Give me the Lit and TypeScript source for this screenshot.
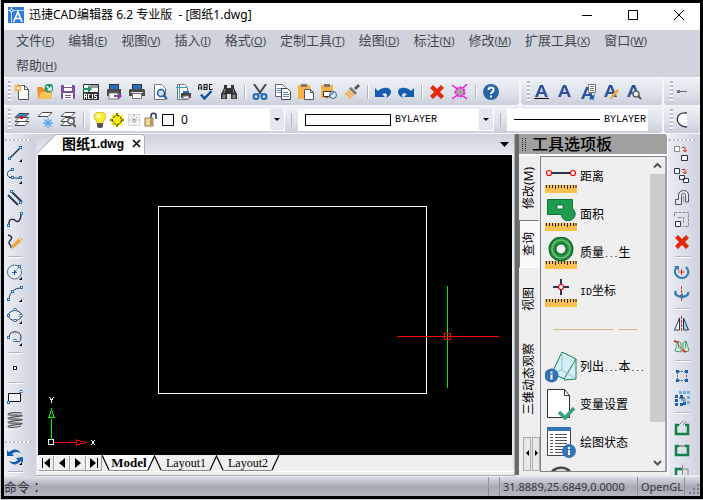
import { LitElement, html, svg, css, TemplateResult, SVGTemplateResult } from "lit";
import { customElement, property, state } from "lit/decorators.js";
import { classMap } from "lit/directives/class-map.js";

const NAVY = "#26364f";
const BLUE = "#1f5fa8";
const RED = "#e02a1a";

const node = (x: number, y: number) => svg`<rect x=${x} y=${y} width="2" height="2" fill="#fff" stroke="#2e74bd" stroke-width="1"/>`;
const flyout = svg`<path d="M15 13v3h-3z" fill="#000"/>`;
const page = svg`<path d="M4.5 1.5h6l4 4v10h-10z" fill="#fff" stroke="#555"/><path d="M10.5 1.5v4h4" fill="none" stroke="#555"/>`;
const letterA = svg`<path fill-rule="evenodd" d="M6 1h3l5 12h-3l-1-3H5l-1 3H1zM5.800 8h3.400L7.500 3.500z" fill="#2f549b"/>`;
const sheet = (y: number, fill: string) => svg`<path d="M5 ${y}h10l-4 4H1z" fill=${fill} stroke="#4a4a4a"/>`;
const dot = (x: number, y: number, c = "#1c62b7") => svg`<rect x=${x} y=${y} width="3" height="3" fill=${c}/>`;

const ICONS: Record<string, SVGTemplateResult> = {
  new: svg`${page}<path d="M4 0v8M0 4h8M1 1l6 6M7 1L1 7" stroke="#f39c1f" stroke-width="1.200"/><circle cx="4" cy="4" r="1.500" fill="#fff"/>`,
  open: svg`<path d="M0 3h5l2 2h7v10H1z" fill="#e8912c"/><path d="M4 8h12l-3 7H1z" fill="#fbc15c"/><circle cx="12" cy="4" r="4.500" fill="#23966a"/><path d="M9.500 2l4 4M14 2.500V6h-3.500" stroke="#fff" stroke-width="1.500" fill="none"/>`,
  save: svg`<path d="M1 1h13l1 1v13H1z" fill="#7b4f99"/><path d="M4 1h8v6H4zM3 9h10v6H3z" fill="#fff"/><path d="M4 3.500h8M5 11.500h6M5 13.500h6" stroke="#7b4f99"/>`,
  acis: svg`<path d="M.5.5h15v15H.5z" fill="#fff" stroke="#333"/><path d="M7 1h8v3H7z" fill="#999"/><path d="M0 4h5V1l4 4-4 4V6H0z" fill="#23966a"/><path d="M0 8h16v8H0z" fill="#333"/><path d="M1.500 15v-5h2v5M1.500 12.500h2M7.500 10.500h-2v4h2M9.500 10v5M14 10.500h-2.500v2h2v2H11" stroke="#fff" fill="none"/>`,
  export: svg`<path d="M3 0h10v5H3z" fill="#333"/><path d="M4 1h8v4H4z" fill="#2370bd"/><path d="M1 5h14v7H1z" fill="#4a4a4a"/><path d="M3 9h9v6H3z" fill="#fff" stroke="#777"/><path d="M8 11h4V8l4 4-4 4v-3H8z" fill="#8343a5"/>`,
  print: svg`<path d="M3 0h10v5H3z" fill="#333"/><path d="M4 1h8v4H4z" fill="#2370bd"/><path d="M0 6l1-1h14l1 1v6H0z" fill="#4a4a4a"/><path d="M3.500 9.500h9v5h-9z" fill="#fff" stroke="#777"/><path d="M2 8.500h12" stroke="#ddd"/>`,
  preview: svg`<path d="M2.500.5h7l4 4v11h-11z" fill="#fff" stroke="#777"/><circle cx="9" cy="9" r="3.500" fill="#cfe4f7" stroke="#1b5da8" stroke-width="1.500"/><path d="M11.500 11.500L15 15" stroke="#1b5da8" stroke-width="2"/>`,
  setup: svg`<path d="M2.500.5h7l3 3v12h-10z" fill="#fff" stroke="#777"/><path d="M4.500 0v16M1 3.500h11" stroke="#35a0c9"/><path d="M6 9h10v5H6z" fill="#444"/><path d="M8 7h6v2H8z" fill="#2370bd"/><path d="M8 12h6v3H8z" fill="#fff" stroke="#777"/>`,
  spell: svg`<path d="M.5 6V2l1-1.500h1L3.500 2v4M.5 4h3M6 .5v5h3v-2H6h3v-3zM14.500.5h-3v5h3" fill="none" stroke="#222" stroke-width="1.200"/><path d="M3 10.500l3.500 4L13.500 7" fill="none" stroke="#1553a2" stroke-width="2.500"/>`,
  find: svg`<path d="M3 1h3v3h4V1h3v3l3 6v5h-6v-5H6v5H0v-5l3-6z" fill="#333"/><path d="M2 11h2v3H2zM12 11h2v3h-2zM4 5l-1 4M12 5l1 4" fill="#888" stroke="#888"/>`,
  cut: svg`<path d="M2 0l7 10M14 0L7 10" stroke="#4a4a4a" stroke-width="2"/><circle cx="4" cy="12.500" r="2.500" fill="none" stroke="#1769b8" stroke-width="2"/><circle cx="12" cy="12.500" r="2.500" fill="none" stroke="#1769b8" stroke-width="2"/>`,
  copy: svg`<path d="M.5.5h7l3 3v9H.5z" fill="#fff" stroke="#667"/><path d="M2 4.500h6M2 6.500h6M2 8.500h4" stroke="#5a8fc6"/><path d="M6.500 4.500h6l3 3v8h-9z" fill="#fff" stroke="#445"/><path d="M8 8.500h5M8 10.500h6M8 12.500h6" stroke="#5a8fc6"/>`,
  paste: svg`<path d="M0 1h12v14H0z" fill="#f6b344"/><path d="M3 0h6v3H3z" fill="#777"/><path d="M6.500 5.500h6l3 3v7h-9z" fill="#fff" stroke="#555"/><path d="M12.500 5.500v3h3" fill="none" stroke="#555"/>`,
  pasteBlock: svg`<path d="M0 1h12v13H0z" fill="#f6b344"/><path d="M3 0h6v3H3z" fill="#777"/><path d="M2.500 7.500h8v5h-8z" fill="#fff" stroke="#333"/><circle cx="12" cy="11" r="3.500" fill="#dce8f7" stroke="#3c5e8c"/><path d="M5 14.500l8-6" stroke="#3c5e8c"/>`,
  brush: svg`<path d="M10 4l4-4 2 2-4 4z" fill="#555"/><path d="M7 3l6 6-2 2-6-6z" fill="#777"/><path d="M5 5l6 6-5 5-6-6z" fill="#f1c584"/><path d="M2 9l5 5M4 7l5 5" stroke="#d79b4f"/>`,
  undo: svg`<path d="M0 4l3 3C8 2 16 3 16 8c0 3-3 5-5 6 2-3 1-6-4-4l3 3H0z" fill="#135cb0"/>`,
  redo: svg`<path d="M16 4l-3 3C8 2 0 3 0 8c0 3 3 5 5 6-2-3-1-6 4-4l-3 3h10z" fill="#135cb0"/>`,
  erase: svg`<path d="M4 1l4 4 4-4 3 3-4 4 4 4-3 3-4-4-4 4-3-3 4-4-4-4z" fill="#e12a0a"/>`,
  purge: svg`<circle cx="8" cy="8" r="4.500" fill="#aaa" stroke="#f018e8" stroke-width="2" stroke-dasharray="3 1"/><path d="M0 1l4 3M15 0l-4 4M0 15l4-3M15 15l-4-3" stroke="#f018e8" stroke-width="1.500"/><path d="M6 6l4 4M10 6l-4 4" stroke="#999"/>`,
  help: svg`<circle cx="8" cy="8" r="8" fill="#2864a5"/><path d="M5.500 6c0-3.500 5.500-3.500 5 0 0 2-2.500 2-2.500 4" fill="none" stroke="#fff" stroke-width="2"/><path d="M7 11.500h2v2H7z" fill="#fff"/>`,
  textUnder: svg`${letterA}<path d="M0 14.500h15" stroke="#111"/>`,
  text: letterA,
  textPage: svg`<g transform="translate(0 2)">${letterA}</g><path d="M8.500.5h7v8h-7z" fill="#fff" stroke="#777"/><path d="M10 2.500h4M10 4.500h4M10 6.500h4" stroke="#777"/><path d="M14 9v2l-3 2v-2l-2 4 5 1-1-1c2-2 2-4 1-7z" fill="#1769b8"/>`,
  textEdit: svg`${letterA}<path d="M14 5l2 2-6 7-3 1 1-3z" fill="#f0a63c"/>`,
  textFind: svg`${letterA}<circle cx="10" cy="10" r="3" fill="#eef" stroke="#666" stroke-width="1.500"/><path d="M12 12l3 3" stroke="#555" stroke-width="2"/>`,
  dimStub: svg`<path d="M2 7.500h10" stroke="#666"/><path d="M2 6h3v3H2z" fill="#777"/>`,
  arcStub: svg`<path d="M12 1C-1-1-1 15 12 15z" fill="#fff"/><path d="M12 1C-1-1-1 15 12 15" fill="none" stroke="#26364f" stroke-width="1.300"/>`,
  layers: svg`${sheet(9.5, "#fff")}${sheet(5.5, "#fff")}${sheet(1.5, "#3c82c4")}<path d="M6 4h3v3H6z" fill="#f00"/>`,
  layerNew: svg`${sheet(0.5, "#fff")}<path d="M11 6v10M6 11h10M7.500 7.500l7 7M14.500 7.500l-7 7" stroke="#58a6ea" stroke-width="1.300"/>`,
  layerFind: svg`${sheet(9.5, "#fff")}${sheet(5.5, "#fff")}${sheet(0.5, "#fff")}<circle cx="11" cy="9" r="3" fill="#eef" stroke="#666" stroke-width="1.500"/><path d="M13 12l3 3" stroke="#555" stroke-width="2"/>`,
  bulb: svg`<path d="M5 10C-1 3 4 0 8 0s9 3 3 10v2H5z" fill="#f8ee31" stroke="#b99b1c" stroke-width=".7"/><circle cx="6.500" cy="4" r="2" fill="#fffcc0"/><path d="M5 11h6v4l-2 1H7l-2-1z" fill="#555"/>`,
  sun: svg`<path d="M8 1v14M1 8h14M3 3l10 10M13 3L3 13" stroke="#fff000" stroke-width="3"/><circle cx="8" cy="8" r="4.500" fill="#ffec00" stroke="#222" stroke-dasharray="3 1"/><path d="M8 1v2M8 13v2M1 8h2M13 8h2" stroke="#222"/>`,
  vpFreeze: svg`<path d="M2.500 2.500h11v11h-11z" fill="none" stroke="#aaa" stroke-dasharray="1 1"/><path d="M8 3v10M3 8h10M4.500 4.500l7 7M11.500 4.500l-7 7" stroke="#999" stroke-dasharray="2 1"/>`,
  lock: svg`<path d="M8 7V3.500c0-3 5-3 5 0V7" fill="none" stroke="#25336b" stroke-width="1.500"/><path d="M2 6h8v8H2z" fill="#eadd9d" stroke="#8b763c"/><path d="M7 7h2v6H7z" fill="#b49c55"/>`,
  swatch: svg`<path d="M2.500 2.500h11v11h-11z" fill="#fff" stroke="#000" stroke-width="1"/>`,
  line: svg`<path d="M2 13L13 2" stroke=${NAVY} stroke-width="1.500"/>${node(1.5, 11.5)}${node(12.5, .5)}${flyout}`,
  pline: svg`<path d="M6 2C-2 2-1 10 5 10h8" fill="none" stroke=${NAVY}/>${node(4.5, .5)}${node(4.5, 8.5)}${node(12.5, 8.5)}${flyout}`,
  mline: svg`<path d="M1 5l10 10M4 1l11 11" stroke=${NAVY} stroke-width="1.800"/>${node(3.5, .5)}${node(12.5, 11.5)}`,
  spline: svg`<path d="M2 14c-1-9 5-7 7-5s5-1 5-7" fill="none" stroke=${NAVY} stroke-width="1.500"/>${node(.5, 12.5)}${node(13.5, .5)}`,
  sketch: svg`<path d="M1 1c7 2 2 5 1 7s3 3 2 6" fill="none" stroke=${NAVY} stroke-width="1.500"/><path d="M13 3l3 3-8 7-4 2 1-4z" fill="#efa63b"/><path d="M12 4l3 3" stroke="#fff"/>`,
  circle: svg`<circle cx="7.500" cy="8" r="7" fill="#eef4fb" stroke="#58697f"/><path d="M5 8.500h5M7.500 6v5" stroke=${BLUE}/><path d="M8 8l4-5" stroke=${BLUE} stroke-dasharray="2 1"/>${node(11.5, 1.5)}${flyout}`,
  arc: svg`<path d="M2 14C2 7 7 2 14 2" fill="none" stroke=${NAVY}/>${node(.5, 12.5)}${node(4.5, 4.5)}${node(13.5, .5)}${flyout}`,
  ellipse: svg`<ellipse cx="8" cy="7.500" rx="6.500" ry="5" fill="#eef4fb" stroke=${NAVY}/>${node(.5, 6.5)}${node(13, 6.5)}${node(7, .5)}${node(7, 11.5)}${flyout}`,
  ellArc: svg`<path d="M2 7c0-7 12-7 12 0s-5 4-6 4" fill="none" stroke=${NAVY}/>${node(.5, 6.5)}${node(7, 9.5)}${flyout}`,
  point: svg`<path d="M6.500 6.500h3v3h-3z" fill="#fff" stroke="#111"/>`,
  rect: svg`<path d="M1.500 3.500h12v8h-12z" fill="#eef3fa" stroke="#111"/>${node(.5, 11.5)}${node(13, .5)}`,
  helix: svg`<path d="M15 1C8 0 1 1 1 2.500s13 0 14 1S1 5 1 6.500s13 0 14 1S1 9 1 10.500s13 0 14 1S1 13 1 14.500s8 1 13-.500" fill="none" stroke="#555" stroke-width="1.200"/>`,
  refresh: svg`<path d="M0 7V1l2 2c5-4 9-3 12 1-4-2-7-1-9 1l2 2zM16 8v6l-2-2c-5 5-9 4-12 0 4 2 7 1 9-1L9 9z" fill="#135cb0"/>${flyout}`,
  copyOne: svg`<path d="M.5.5h5v5h-5z" fill="#fff" stroke="#888"/><path d="M7.500 9.500h6v5h-6z" fill="#fff" stroke=${NAVY}/><path d="M8 1.500h3v4M9 4l2 2 2-2" fill="none" stroke=${RED}/>`,
  copyMany: svg`<path d="M.5.5h5v5h-5z" fill="#fff" stroke=${NAVY}/><path d="M5.500 7.500h5v4h-5zM9.500 10.500h5v4h-5z" fill="#fff" stroke=${NAVY}/><path d="M8 1.500h3v4M9 4l2 2 2-2" fill="none" stroke=${RED}/>`,
  offset: svg`<path d="M1.500 14.500V9.500h3V5c0-6 10-6 10 0v7h-3V5.500c0-3-4-3-4 0v9z" fill="#e4e8ef" stroke="#4b5564"/><path d="M9.500 12V6" stroke="#999"/>`,
  stretch: svg`<path d="M.5 4.500v-4h14v14h-6" fill="none" stroke="#888" stroke-dasharray="3 1"/><path d="M4 5.500h5.500V12" fill="none" stroke="#888" stroke-dasharray="3 1"/><path d="M1.500 9.500h5v5h-5z" fill="#fff" stroke=${NAVY}/>`,
  rotate: svg`<path d="M3 3c-5 5 0 11 5 11s9-6 4-11" fill="none" stroke="#2f7fb5" stroke-width="2"/><path d="M0 2h5v5z" fill="#2f7fb5"/><path d="M7.500 5v6M4.500 8h6" stroke=${RED}/>`,
  rotate3d: svg`<path d="M2 5c-4 7 14 8 12 1" fill="none" stroke="#2f7fb5" stroke-width="2.500"/><path d="M9 13V7l-4 3z" fill="#2f7fb5"/><path d="M7.500 0v15" stroke=${RED} stroke-dasharray="3 1"/>`,
  mirror: svg`<path d="M5.500 2v12h-5z" fill="#fff" stroke=${NAVY}/><path d="M9.500 2v12h5z" fill="#aacdec" stroke=${NAVY}/><path d="M7.500 0v16" stroke=${RED} stroke-dasharray="3 1"/>`,
  mirror3d: svg`<path d="M1 13l3-10 3 2v9zM15 13L12 3 9 5v9z" fill="#e4f4ea" stroke="#43966a"/><path d="M4 3l1 8M12 3l-1 8" stroke="#43966a"/><path d="M0 3l3 1M9 12l3 2" stroke=${RED} stroke-width="2"/><path d="M2 4l8 9" stroke=${RED} stroke-dasharray="2 1"/>`,
  array: svg`<path d="M4 3.500h8M4 12.500h8M3.500 4v8M12.500 4v8" stroke="#667" stroke-dasharray="2 1"/>${dot(2, 2)}${dot(11, 2)}${dot(2, 11)}${dot(11, 11)}`,
  array3d: svg`${dot(5, 1, "#77aee2")}${dot(9, 1, "#77aee2")}${dot(13, 1, "#77aee2")}${dot(13, 6, "#77aee2")}${dot(13, 11, "#77aee2")}${dot(9, 9, "#77aee2")}${dot(1, 5)}${dot(6, 5)}${dot(1, 9)}${dot(1, 13)}${dot(6, 13)}${dot(9, 12)}<path d="M5 8h6M8 5v6" stroke="#345"/>`,
  break1: svg`<path d="M5 5H2v9h12V5h-3" fill="none" stroke="#16804a" stroke-width="2.500"/><path d="M5 5l4-4M9 5l3-4" stroke="#888"/>`,
  break2: svg`<path d="M5 4H2v9h12V4h-3" fill="none" stroke="#16804a" stroke-width="2.500"/><path d="M5 4h6" stroke="#999" stroke-width="2"/>`,
  trim: svg`<path d="M2 16V5h6" fill="none" stroke="#16804a" stroke-width="2.500"/><path d="M8.500 1v15M8 5h6v11" fill="none" stroke="#888"/>`,
};

const ruler = svg`<path d="M0 24h32v8H0z" fill="#fcc04f"/><path d="M1.500 24v3M4.500 24v3M7.500 24v3M10.500 24v4M13.500 24v3M16.500 24v3M19.500 24v3M22.500 24v4M25.500 24v3M28.500 24v3M31 24v3" stroke="#222"/>`;
const info = (x: number, y: number) => svg`<circle cx=${x} cy=${y} r="7" fill="#3573b9"/><path d="M${x - 1} ${y - 1}h2v5h-2zM${x - 1} ${y - 4}h2v2h-2z" fill="#fff"/>`;

const TOOLS: Record<string, SVGTemplateResult> = {
  distance: svg`${ruler}<path d="M4 12h24" stroke="#26364f" stroke-width="2"/><circle cx="4" cy="12" r="2.500" fill="#fff" stroke="#f00" stroke-width="1.200"/><circle cx="28" cy="12" r="2.500" fill="#fff" stroke="#f00" stroke-width="1.200"/>`,
  area: svg`${ruler}<path d="M2.500.5h25v9c6 5 1 13-5 12-4 0-6-3-6-6h-14z" fill="#1c9d4e" stroke="#13713b"/><path d="M12 6h6v4h-6z" fill="#fff" stroke="#13713b"/>`,
  mass: svg`${ruler}<circle cx="16" cy="12" r="8.500" fill="none" stroke="#0d6f2f" stroke-width="8"/><circle cx="16" cy="12" r="8.500" fill="none" stroke="#26903f" stroke-width="5"/><circle cx="16" cy="12" r="9" fill="none" stroke="#75bd76" stroke-width="1.500"/>`,
  ident: svg`${ruler}<path d="M16 4v16M8 12h16" stroke="#26364f" stroke-width="2"/><circle cx="16" cy="12" r="2.500" fill="#fff" stroke="#f00" stroke-width="1.200"/>`,
  list: svg`<path d="M17 1l14 7v20l-14 1-10-7z" fill="#d5f0f8"/><path d="M17 1l14 7-12 20-12-6zM31 8v20l-12 1" fill="none" stroke="#16804a"/><path d="M17 2v17l13 8M17 19l-9 3" fill="none" stroke="#8bc2c8"/>${info(6.5, 24.5)}`,
  vars: svg`<path d="M2.500.5h17l5 6v22h-22z" fill="#fff" stroke="#333"/><path d="M19.500.5v6h5" fill="none" stroke="#333"/><path d="M14 23l6 6 9-10" fill="none" stroke="#34a27b" stroke-width="3.500"/>`,
  status: svg`<path d="M2.500 3.500h23v25h-23z" fill="#fff" stroke="#444"/><path d="M2 0h24v4H2z" fill="#3573b9"/><path d="M5 7.500h3M10 7.500h12M5 10.500h3M10 10.500h12M5 13.500h3M10 13.500h12M5 16.500h3M10 16.500h12M5 19.500h3M10 19.500h12M5 22.500h3M10 22.500h8M5 25.500h3M10 25.500h8" stroke="#555"/>${info(24, 24)}`,
  more: svg`<path d="M6 6c4-6 16-6 20 0z" fill="#444"/><path d="M10 6c3-3 9-3 12 0z" fill="#ddd"/>`,
};

@customElement("cad-icon")
class CadIcon extends LitElement {
  @property() name = "";
  static styles = css`
    :host { display: block; flex: none; width: 16px; height: 16px; }
    svg { display: block; width: 100%; height: 100%; }
  `;
  render() {
    return html`<svg viewBox="0 0 16 16" aria-hidden="true">${ICONS[this.name]}</svg>`;
  }
}

@customElement("tool-strip")
class ToolStrip extends LitElement {
  @property({ attribute: false }) items: string[] = [];
  @property({ type: Boolean, reflect: true }) vertical = false;
  static styles = css`
    :host { display: flex; align-items: center; gap: 7px; min-width: 0; }
    :host([vertical]) { flex-direction: column; gap: 6px; }
    button { flex: none; display: block; width: 16px; height: 16px; padding: 0; border: 0; background: none; }
    .sep { flex: none; width: 1px; height: 14px; background: #b4b6bb; border-right: 1px solid #fff; margin-right: -1px; }
    :host([vertical]) .sep { width: 15px; height: 1px; border-right: 0; margin: 0; border-bottom: 1px solid #fff; }
  `;
  render() {
    return this.items.map((n) =>
      n === "|" ? html`<span class="sep"></span>` : html`<button title=${n} aria-label=${n}><cad-icon name=${n}></cad-icon></button>`);
  }
}

const MENUS: [string, string][] = [
  ["文件", "F"], ["编辑", "E"], ["视图", "V"], ["插入", "I"], ["格式", "O"], ["定制工具", "T"],
  ["绘图", "D"], ["标注", "N"], ["修改", "M"], ["扩展工具", "X"], ["窗口", "W"], ["帮助", "H"],
];

@customElement("app-root")
class AppRoot extends LitElement {
  @state() private layout = "Model";

  static styles = css`
    :host {
      display: block; padding: 0 0 1px 1px; background: #c3ccd8; color: #000;
      font: 12px/16px "Noto Sans", "Noto Sans CJK SC", sans-serif;
    }
    button, select { font: inherit; color: inherit; }
    button { padding: 0; border: 0; background: none; }
    .window {
      box-sizing: border-box; display: flex; flex-direction: column; min-height: calc(100vh - 1px);
      border: 3px solid #000; background: #e6eaf1;
    }
    .title { display: flex; align-items: center; height: 27px; box-sizing: border-box; padding: 0 10px 4px 4px; background: #fff; }
    .logo { width: 16px; height: 16px; margin-right: 5px; }
    .title h1 { flex: 1; margin: 0; font-size: 12px; font-weight: 400; white-space: pre; }
    .caption { display: flex; gap: 24px; }
    .caption button { width: 22px; height: 22px; }
    .caption svg { display: block; }
    .menu { display: flex; flex-wrap: wrap; gap: 5px 14px; padding: 0 16px 2px 12px; background: #cfd3dc; }
    .menu button { height: 20px; font-size: 13px; line-height: 20px; color: #414750; white-space: nowrap; }
    .key { font-size: 11px; }
    .bars { display: flex; flex-direction: column; gap: 1px; padding: 1px 0; background: #f3f5f9; }
    .row { display: flex; gap: 2px; height: 27px; }
    .bar {
      display: flex; align-items: center; gap: 6px; padding-left: 4px; min-width: 0; box-sizing: border-box; border-radius: 3px;
      background: linear-gradient(#eef1f6, #dce1ea 60%, #c9ced9);
    }
    .bar.grow { flex: 1; }
    .bar.text { width: 141px; padding-left: 6px; gap: 4px; }
    .bar.stub { width: 36px; padding-left: 6px; gap: 2px; }
    .grip { flex: none; width: 3px; height: 21px; background: repeating-linear-gradient(#b6bac3 0 2px, #fff 2px 4px); }
    .bar.grow .grip { margin-right: -3px; }
    .combo { box-sizing: border-box; display: flex; align-items: center; height: 22px; background: #fff; }
    .layer { width: 195px; padding-left: 2px; gap: 1px; }
    .color { width: 196px; }
    .ltype { width: 141px; }
    .color, .ltype { padding-left: 7px; gap: 4px; }
    .combo select { flex: 1; min-width: 0; height: 22px; padding: 0; border: 0; background: none; appearance: none; outline: none; }
    .layer select { padding-left: 4px; }
    .color select, .ltype select { font: 10px "Liberation Mono", monospace; }
    .drop { flex: none; width: 14px; height: 21px; background: #e2e6ee; border-right: 1px solid #fff; pointer-events: none; }
    .sample { width: 84px; height: 10px; border: 1px solid #000; }
    .stroke { width: 86px; height: 1px; background: #000; }
    .sep { flex: none; width: 1px; height: 14px; background: #b4b6bb; }
    .main { flex: 1; display: flex; min-height: 0; }
    .side { flex: none; display: flex; flex-direction: column; overflow: hidden; background: linear-gradient(90deg, #eaedf4, #cdd2de); }
    .side .handle { flex: none; height: 2px; width: 26px; margin: 5px 0 5px 1px; background: repeating-linear-gradient(90deg, #b3b7c1 0 2px, #fff 2px 4px); }
    .left { width: 32px; }
    .right { width: 32px; height: 341px; border-left: 1px solid #fff; }
    .left tool-strip { align-self: flex-start; margin-left: 3px; }
    .right tool-strip { align-self: flex-start; margin-left: 6px; }
    .left .second { margin: 13px 0 6px 1px; }
    .doc { flex: 1; display: flex; flex-direction: column; min-width: 0; border-right: 1px solid #aaa; }
    .files { display: flex; align-items: stretch; height: 20px; background: linear-gradient(#cdd2dc, #e3e7ee); border-bottom: 1px solid #fafbfc; }
    .file { position: relative; display: flex; align-items: center; width: 108px; box-sizing: border-box; padding-left: 26px; font-weight: 700; white-space: nowrap; }
    .file svg { position: absolute; left: 0; top: 0; }
    .file span { position: relative; }
    .file .cjk { font-size: 14px; line-height: 18px; }
    .file .lat { font-family: "Liberation Sans", sans-serif; }
    .file button { position: relative; margin-left: 7px; width: 10px; height: 12px; }
    .file button svg { position: static; }
    .files .list { margin-left: auto; margin-right: 4px; width: 10px; }
    .files .list svg { display: block; }
    .canvas { flex: 1; min-height: 0; margin: 0 2px; background: #000; }
    .canvas svg { display: block; width: 100%; height: 300px; }
    .sheets { display: flex; align-items: stretch; height: 16px; margin: 0 2px; background: #efefef; }
    .nav { box-sizing: border-box; width: 16px; border: 1px solid; border-color: #fff #999 #999 #fff; }
    .nav svg { display: block; width: 14px; height: 14px; }
    .sheetrow { display: flex; }
    .sheet { position: relative; height: 16px; font: 12px/16px "Liberation Serif", serif; }
    .sheet svg { position: absolute; left: 0; top: 0; width: 100%; height: 100%; }
    .sheet span { position: relative; }
    .sheet.on { font-weight: 700; font-size: 13px; }
    .sheet.m { width: 54px; }
    .sheet.l { width: 64px; margin-left: -2px; }
    .foot { height: 6px; background: linear-gradient(#fff 0 1px, #efefef 1px 4px, #a6abb8 4px 5px, #eceff4 5px); }
    .palette { flex: none; width: 152px; display: flex; flex-direction: column; background: #efefef; border-left: 4px solid #696969; box-sizing: border-box; height: 341px; }
    .palette h2 { display: flex; align-items: center; gap: 6px; margin: 0; height: 20px; padding-left: 3px; background: #a0a0a0; font-size: 16px; line-height: 20px; font-weight: 500; border-radius: 0 3px 0 0; }
    .dots { width: 4px; height: 14px; background: repeating-linear-gradient(#a0a0a0 0 1px, transparent 1px 2px), repeating-linear-gradient(90deg, #222 0 1px, #a0a0a0 1px 3px); }
    .body { flex: 1; display: flex; min-height: 0; border-top: 2px solid #fff; }
    .vtabs { width: 21px; display: flex; flex-direction: column; align-items: flex-start; }
    .vtab {
      display: flex; align-items: center; justify-content: center; width: 20px; box-sizing: border-box;
      writing-mode: vertical-rl; text-orientation: sideways; transform: rotate(180deg); white-space: nowrap;
    }
    .t0 { height: 64px; } .t1 { height: 48px; } .t2 { height: 62px; } .t3 { height: 98px; }
    .vtab.on { background: #f9f9f9; border: 1px solid; border-color: #fff #777 #777 #fff; }
    .spin { display: flex; gap: 1px; margin: 9px 0 0 4px; flex: 1; }
    .spin button { width: 8px; height: 34px; box-sizing: border-box; border: 1px solid #aaa; background: #e8e8e8; }
    .spin svg { display: block; }
    .tools { flex: 1; display: flex; min-width: 0; border-left: 1px solid #7c828e; border-top: 1px solid #7c828e; border-bottom: 1px solid #7c828e; border-right: 2px solid #9aa0aa; margin-bottom: 3px; }
    ul.list { flex: 1; min-width: 0; margin: 0; padding: 1px 0 0 4px; list-style: none; overflow: hidden; height: 314px; box-sizing: border-box; }
    .tool { display: flex; align-items: center; gap: 3px; height: 38px; white-space: nowrap; }
    .tool svg { display: block; flex: none; }
    .tool .id { font: 10px "Liberation Mono", monospace; }
    .tool .gap { font: 8px "Liberation Mono", monospace; }
    .rule { display: flex; gap: 6px; align-items: center; height: 38px; padding-left: 8px; }
    .rule i { height: 1px; width: 60px; background: #d2b886; }
    .rule i + i { width: 18px; }
    .scroll { flex: none; width: 15px; display: flex; flex-direction: column; background: #f0f0f0; }
    .scroll button { height: 17px; }
    .scroll svg { display: block; margin: auto; }
    .track { flex: 1; }
    .thumb { height: 248px; background: #cdcdcd; }
    .status {
      display: flex; align-items: stretch; height: 19px; line-height: 20px; color: #33373d; font-size: 11px;
      background: linear-gradient(#d9dde4, #a5aab4 50%, #b4b8c1);
    }
    .status div { box-sizing: border-box; border-left: 1px solid #8c919b; padding-left: 3px; white-space: nowrap; }
    .status .cmd { flex: 1; border: 0; padding: 0; font: 13px/20px "Noto Sans CJK TC", sans-serif; }
    .status .p0 { width: 11px; }
    .status .p1 { width: 138px; }
    .status .p2 { width: 47px; }
    .status .p3 { width: 16px; padding: 0; }
  `;

  private tool(icon: string, label: TemplateResult | string) {
    return html`<li class="tool"><svg width="32" height="32" viewBox="0 0 32 32" aria-hidden="true">${TOOLS[icon]}</svg><span>${label}</span></li>`;
  }

  private drop() {
    return html`<svg class="drop" viewBox="0 0 14 21" aria-hidden="true"><path d="M4 9h6l-3 3z" fill="#000"/></svg>`;
  }

  private nav(label: string, d: string) {
    return html`<button class="nav" aria-label=${label}><svg viewBox="0 0 14 14"><path d=${d} /></svg></button>`;
  }

  private sheet(name: string, cls: string) {
    const on = this.layout === name;
    const w = cls === "m" ? 54 : 64;
    return html`<button class=${classMap({ sheet: true, [cls]: true, on })} @click=${() => (this.layout = name)}>
      <svg viewBox="0 0 ${w} 16"><path d="M0 0l7 15h${w - 15}l7-15z" fill=${on ? "#fff" : "#efefef"} /><path d="M7 15.500h${w - 15}" stroke="#888"/><path d="M0 0l7 15M${w - 8} 15l7-15" stroke="#000" stroke-width="1.200" fill="none"/></svg><span>${name}</span></button>`;
  }

  render() {
    return html`
    <div class="window">
      <header class="title">
        <svg class="logo" viewBox="0 0 16 16" aria-hidden="true"><rect width="16" height="16" fill="#2f7be0"/><path d="M0 3.500h16M3.500 0v16" stroke="#b9d5f7"/><circle cx="3.500" cy="3.500" r="1.500" fill="#2f7be0" stroke="#fff"/><path d="M5.500 15L10 5l4 10M7 11.500h6" stroke="#fff" stroke-width="1.700" fill="none"/></svg>
        <h1>迅捷CAD编辑器 6.2 专业版  - [图纸1.dwg]</h1>
        <div class="caption">
          <button aria-label="最小化"><svg width="22" height="22"><path d="M6 11.500h10" stroke="#000"/></svg></button>
          <button aria-label="最大化"><svg width="22" height="22"><path d="M6.500 6.500h9v9h-9z" fill="none" stroke="#000"/></svg></button>
          <button aria-label="关闭"><svg width="22" height="22"><path d="M6 6l10 10M16 6L6 16" stroke="#000"/></svg></button>
        </div>
      </header>
      <nav class="menu">${MENUS.map(([t, k]) => html`<button>${t}<span class="key">(<u>${k}</u>)</span></button>`)}</nav>

      <div class="bars">
        <div class="row">
          <div class="bar grow"><span class="grip"></span>
            <tool-strip .items=${["new", "open", "save", "acis", "export", "print", "preview", "setup", "spell", "find", "|", "cut", "copy", "paste", "pasteBlock", "brush", "|", "undo", "redo", "|", "erase", "purge", "|", "help"]}></tool-strip>
          </div>
          <div class="bar text"><span class="grip"></span><tool-strip .items=${["textUnder", "text", "textPage", "textEdit", "textFind"]}></tool-strip></div>
          <div class="bar stub"><span class="grip"></span><cad-icon name="dimStub"></cad-icon></div>
        </div>
        <div class="row">
          <div class="bar grow"><span class="grip"></span>
            <tool-strip .items=${["layers", "layerNew", "layerFind", "|"]}></tool-strip>
            <div class="combo layer">
              ${["bulb", "sun", "vpFreeze", "lock", "swatch"].map((n) => html`<cad-icon name=${n}></cad-icon>`)}
              <select aria-label="图层"><option>0</option></select>${this.drop()}
            </div>
            <span class="sep"></span>
            <div class="combo color"><span class="sample"></span><select aria-label="颜色"><option>BYLAYER</option></select>${this.drop()}</div>
            <span class="sep"></span>
            <div class="combo ltype"><span class="stroke"></span><select aria-label="线型"><option>BYLAYER</option></select></div>
          </div>
          <div class="bar stub"><span class="grip"></span><cad-icon name="arcStub"></cad-icon></div>
        </div>
      </div>

      <div class="main">
        <aside class="side left">
          <span class="handle"></span>
          <tool-strip vertical .items=${["line", "pline", "mline", "spline", "sketch", "|", "circle", "arc", "ellipse", "ellArc", "|", "point", "|", "rect", "helix"]}></tool-strip>
          <span class="handle second"></span>
          <tool-strip vertical .items=${["refresh", "|"]}></tool-strip>
        </aside>

        <section class="doc">
          <div class="files">
            <div class="file">
              <svg width="110" height="20" aria-hidden="true"><path d="M1 20L20 1h87l2 2v17z" fill="#fff"/><path d="M1 19.500L20 .5h87l1.500 2V20" fill="none" stroke="#a9aeb9"/></svg>
              <span class="cjk">图纸</span><span class="lat">1.dwg</span>
              <button aria-label="关闭图纸"><svg width="10" height="12"><path d="M2 2l7 7M9 2L2 9" stroke="#000" stroke-width="1.500"/></svg></button>
            </div>
            <button class="list" aria-label="图纸列表"><svg width="10" height="20"><path d="M0 8h9l-4.500 5z"/></svg></button>
          </div>
          <div class="canvas">
            <svg viewBox="0 0 474 300" preserveAspectRatio="xMinYMin meet" shape-rendering="crispEdges" fill="none">
              <path d="M120.500 51.500h268v187h-268z" stroke="#fff"/>
              <path d="M409.500 131v102" stroke="#00f000"/><path d="M359 181.500h102M406.500 178.500h6v6h-6z" stroke="#f00"/>
              <path d="M10.500 284.500h5v5h-5z" stroke="#fff"/>
              <path d="M13.500 285v-21M11 262.500h5l-2.500-8z" stroke="#0f0"/>
              <path d="M16 287.500h22M38.500 285v5l9-2.500z" stroke="#f00"/>
              <path d="M11 242l2.500 3 2.500-3M13.500 245v3M53 285l4 5M57 285l-4 5" stroke="#fff"/>
            </svg>
          </div>
          <div class="sheets">
            ${this.nav("第一张", "M3 2h1v10H3zM11 2v10L5 7z")}${this.nav("上一张", "M10 2v10L4 7z")}${this.nav("下一张", "M4 2v10l6-5z")}${this.nav("最后一张", "M3 2v10l6-5zM10 2h1v10h-1z")}
            <div class="sheetrow">${this.sheet("Model", "m")}${this.sheet("Layout1", "l")}${this.sheet("Layout2", "l")}</div>
          </div>
          <div class="foot"></div>
        </section>

        <section class="palette">
          <h2><span class="dots"></span>工具选项板</h2>
          <div class="body">
            <div class="vtabs">
              <button class="vtab t0">修改(M)</button><button class="vtab t1 on">查询</button><button class="vtab t2">视图</button><button class="vtab t3">三维动态观察</button>
              <div class="spin"><button aria-label="向左"><svg width="6" height="32"><path d="M5 12v6l-3-3z"/></svg></button><button aria-label="向右"><svg width="6" height="32"><path d="M2 12v6l3-3z"/></svg></button></div>
            </div>
            <div class="tools">
              <ul class="list">
                ${this.tool("distance", "距离")}
                ${this.tool("area", "面积")}
                ${this.tool("mass", html`质量<span class="gap">...</span>生`)}
                ${this.tool("ident", html`<span class="id">ID</span>坐标`)}
                <li class="rule"><i></i><i></i></li>
                ${this.tool("list", html`列出<span class="gap">...</span>本<span class="gap">...</span>`)}
                ${this.tool("vars", "变量设置")}
                ${this.tool("status", "绘图状态")}
                ${this.tool("more", "")}
              </ul>
              <div class="scroll">
                <button aria-label="向上滚动"><svg width="9" height="9"><path d="M1 6.500L4.500 3 8 6.500" fill="none" stroke="#555" stroke-width="2"/></svg></button>
                <div class="track"><div class="thumb"></div></div>
                <button aria-label="向下滚动"><svg width="9" height="9"><path d="M1 3l3.500 3.500L8 3" fill="none" stroke="#555" stroke-width="2"/></svg></button>
              </div>
            </div>
          </div>
        </section>

        <aside class="side right">
          <span class="handle"></span>
          <tool-strip vertical .items=${["copyOne", "copyMany", "offset", "stretch", "erase", "|", "rotate", "rotate3d", "|", "mirror", "mirror3d", "|", "array", "array3d", "|", "break1", "break2", "trim"]}></tool-strip>
        </aside>
      </div>

      <footer class="status">
        <div class="cmd">命令：</div><div class="p0"></div><div class="p1">31.8889,25.6849,0.0000</div><div class="p2">OpenGL</div>
        <div class="p3"><svg width="15" height="19" aria-hidden="true"><path d="M12 7h2v2h-2zM8 11h2v2H8zM12 11h2v2h-2zM4 15h2v2H4zM8 15h2v2H8zM12 15h2v2h-2z" fill="#7b808a"/></svg></div>
      </footer>
    </div>`;
  }
}
